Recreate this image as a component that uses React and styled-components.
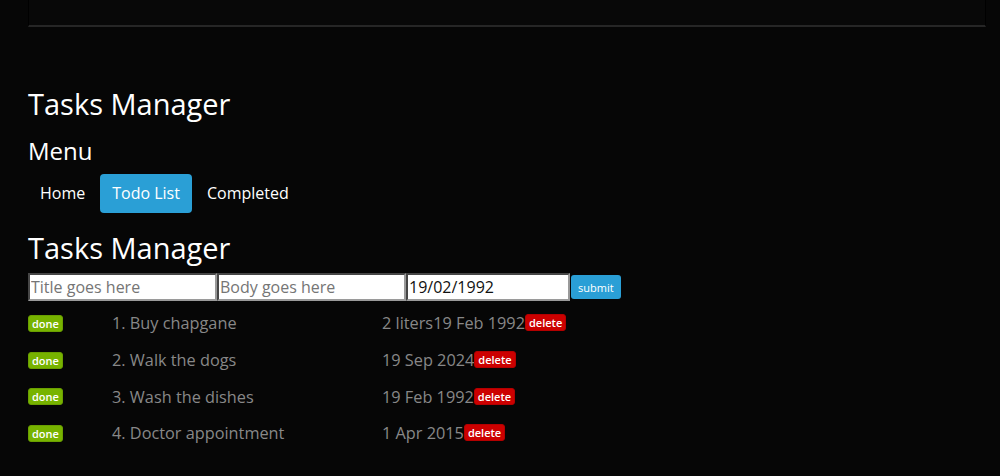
import styled, { createGlobalStyle } from "styled-components";

const GlobalStyle = createGlobalStyle`
  html, body {
    margin: 0;
    padding: 0;
    background: #060606;
    font-family: "Open Sans", "DejaVu Sans", sans-serif;
    color: #888;
  }
`;

const Page = styled.div`
  padding: 0 14px 0 28px;
`;

const TopBar = styled.div`
  height: 25px;
  border-left: 1px solid #000;
  border-right: 1px solid #000;
  border-bottom: 2px solid #262626;
  background: #080808;
`;

const Title = styled.h1`
  margin: ${(p) => p.$top}px 0 0;
  font-size: 29px;
  line-height: 35px;
  font-weight: 400;
  color: #fff;
`;

const SubTitle = styled.h2`
  margin: 15px 0 0;
  font-size: 24px;
  line-height: 29px;
  font-weight: 400;
  color: #fff;
`;

const Nav = styled.nav`
  display: flex;
  gap: 3px;
  margin-top: 9px;
`;

const Pill = styled.a`
  display: block;
  padding: 10px 12px;
  font-size: 16px;
  line-height: 19px;
  border-radius: 4px;
  color: #fff;
  background: ${(p) => (p.$active ? "#2a9fd6" : "transparent")};
  cursor: pointer;
`;

const Form = styled.form`
  display: flex;
  align-items: center;
  margin-top: 8px;
`;

const Field = styled.input`
  box-sizing: border-box;
  width: ${(p) => p.$w}px;
  height: 28px;
  padding: 0 1px;
  border: 2px inset #9a9a9a;
  background: #fff;
  font-family: "Open Sans", "DejaVu Sans", sans-serif;
  font-size: 16px;
  color: #111;
  &::placeholder {
    color: #757575;
  }
`;

const Submit = styled.button`
  margin-left: 1px;
  height: 24px;
  padding: 0 7px;
  border: 0;
  border-radius: 3px;
  background: #2a9fd6;
  color: #fff;
  font-family: "Open Sans", "DejaVu Sans", sans-serif;
  font-size: 11px;
`;

const List = styled.div`
  margin-top: 4px;
`;

const Row = styled.div`
  display: grid;
  grid-template-columns: 84px 270px auto;
  align-items: center;
  height: 36.7px;
  font-size: 16.3px;
`;

const Badge = styled.span`
  display: inline-block;
  padding: 0 3px;
  height: 17px;
  line-height: 16px;
  border-radius: 3px;
  font-size: 11px;
  font-weight: 600;
  color: #fff;
  background: ${(p) => (p.$kind === "danger" ? "#cc0000" : "#77b300")};
  border: 1px solid ${(p) => (p.$kind === "danger" ? "#b30000" : "#6a9f00")};
  box-sizing: border-box;
  vertical-align: 2px;
  justify-self: start;
`;

const DateCell = styled.div`
  white-space: nowrap;
`;

const tasks = [
  { id: 1, title: "Buy chapgane", body: "2 liters", date: "19 Feb 1992" },
  { id: 2, title: "Walk the dogs", body: "", date: "19 Sep 2024" },
  { id: 3, title: "Wash the dishes", body: "", date: "19 Feb 1992" },
  { id: 4, title: "Doctor appointment", body: "", date: "1 Apr 2015" },
];

export default function App() {
  return (
    <>
      <GlobalStyle />
      <Page>
        <TopBar />
        <Title $top={59}>Tasks Manager</Title>
        <SubTitle>Menu</SubTitle>
        <Nav>
          <Pill>Home</Pill>
          <Pill $active>Todo List</Pill>
          <Pill>Completed</Pill>
        </Nav>
        <Title $top={17}>Tasks Manager</Title>
        <Form onSubmit={(e) => e.preventDefault()}>
          <Field $w={189} placeholder="Title goes here" />
          <Field $w={189} placeholder="Body goes here" />
          <Field $w={164} defaultValue="19/02/1992" />
          <Submit type="submit">submit</Submit>
        </Form>
        <List>
          {tasks.map((t) => (
            <Row key={t.id}>
              <Badge>done</Badge>
              <div>
                {t.id}. {t.title}
              </div>
              <DateCell>
                {t.body}
                {t.date}
                <Badge $kind="danger">delete</Badge>
              </DateCell>
            </Row>
          ))}
        </List>
      </Page>
    </>
  );
}
